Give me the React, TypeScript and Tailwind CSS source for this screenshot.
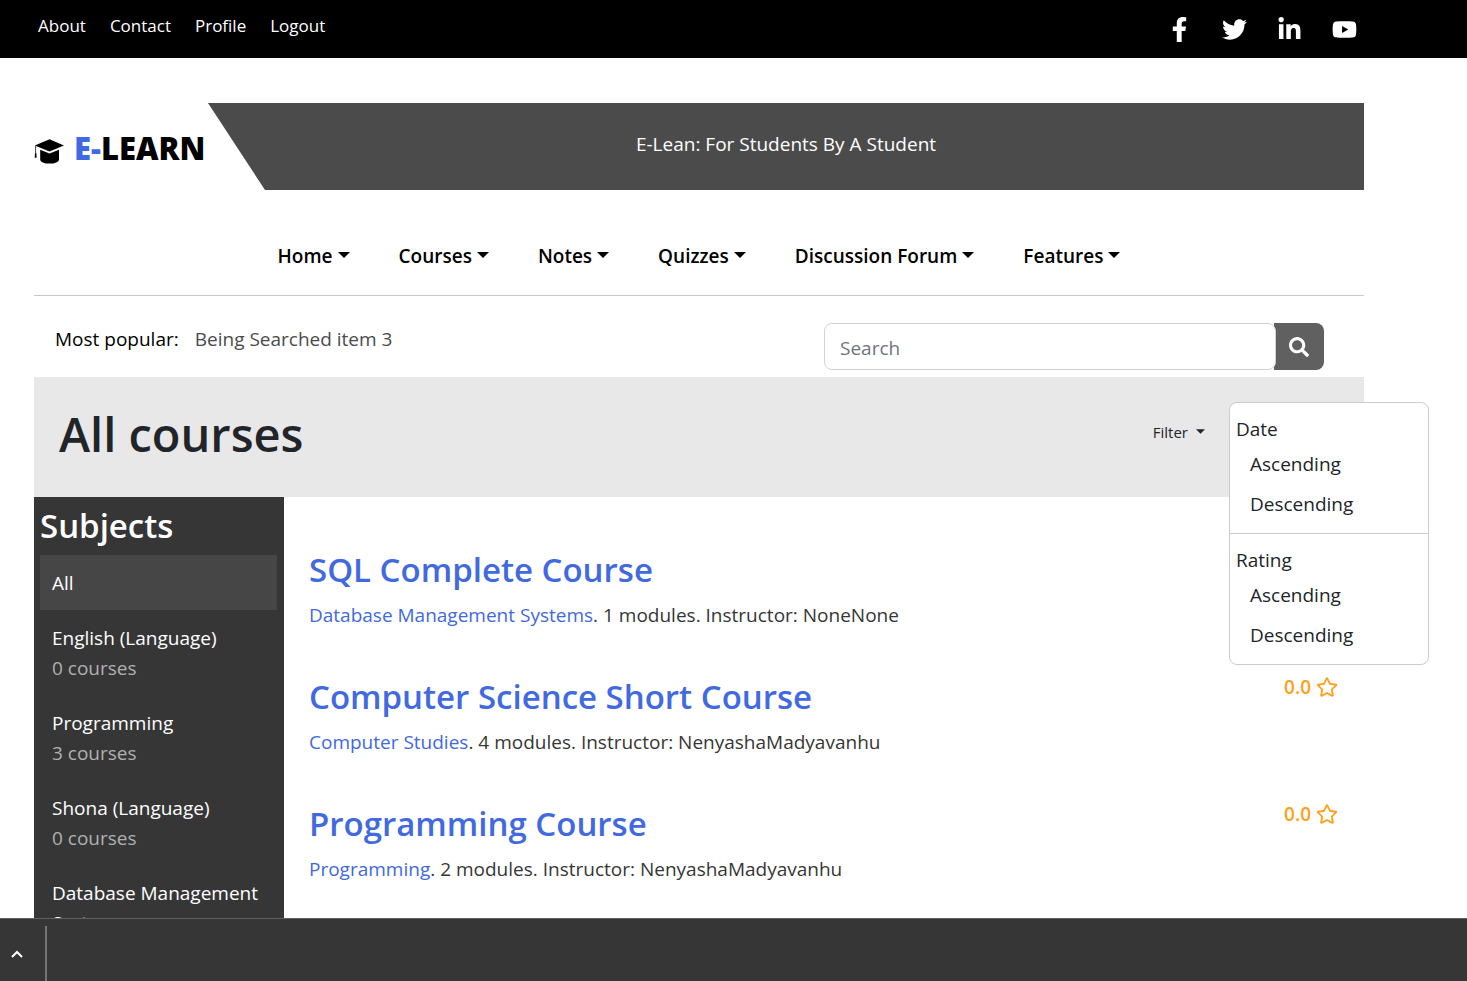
import React from "react";
import {
  FaFacebookF,
  FaTwitter,
  FaLinkedinIn,
  FaYoutube,
  FaSearch,
  FaRegStar,
} from "react-icons/fa";

const topLinks = ["About", "Contact", "Profile", "Logout"];
const menus = ["Home", "Courses", "Notes", "Quizzes", "Discussion Forum", "Features"];

const subjects = [
  { name: "All", count: "", active: true },
  { name: "English (Language)", count: "0 courses", active: false },
  { name: "Programming", count: "3 courses", active: false },
  { name: "Shona (Language)", count: "0 courses", active: false },
  { name: "Database Management Systems", count: "", active: false },
];

const courses = [
  { title: "SQL Complete Course", subject: "Database Management Systems", modules: 1, instructor: "NoneNone", rating: "" },
  { title: "Computer Science Short Course", subject: "Computer Studies", modules: 4, instructor: "NenyashaMadyavanhu", rating: "0.0" },
  { title: "Programming Course", subject: "Programming", modules: 2, instructor: "NenyashaMadyavanhu", rating: "0.0" },
];

function Caret({ small = false }: { small?: boolean }) {
  return (
    <svg
      viewBox="0 0 12 6"
      className={small ? "mb-0.5 h-[5px] w-[9px]" : "mb-0.5 h-1.5 w-3"}
      fill="currentColor"
      aria-hidden="true"
    >
      <path d="M0 0H12L6 6Z" />
    </svg>
  );
}

function GraduationCap() {
  return (
    <svg viewBox="0 0 30 26" className="h-[26px] w-[30px]" fill="black" aria-hidden="true">
      <path d="M15.5 0.3L30 6.6L15.5 12.6L0.8 6.6Z" />
      <path d="M6.2 10.8L15.5 14.4L25 10.8V20.4C25 23 20.6 24.6 15.5 24.6S6.2 23 6.2 20.4Z" />
      <path d="M1.6 7V16" stroke="#333333" strokeWidth="0.9" fill="none" />
      <path d="M1 14.2h1.3l0.3 4.5H0.7z" />
    </svg>
  );
}

function TopBar() {
  return (
    <header className="flex h-[58px] shrink-0 items-center justify-between bg-black pr-[110px] pl-[38px] text-white">
      <nav className="flex gap-6 pb-1.5 text-[17px] leading-7">
        {topLinks.map((label) => (
          <a key={label} href="#">{label}</a>
        ))}
      </nav>
      <div className="flex items-center gap-[30px] text-[25px]">
        <a href="#" aria-label="Facebook"><FaFacebookF /></a>
        <a href="#" aria-label="Twitter"><FaTwitter /></a>
        <a href="#" aria-label="LinkedIn"><FaLinkedinIn /></a>
        <a href="#" aria-label="YouTube"><FaYoutube /></a>
      </div>
    </header>
  );
}

function Banner() {
  return (
    <div className="mt-[45px] flex h-[87px]">
      <a href="#" className="flex w-[174px] shrink-0 items-center gap-2.5 pt-0.5">
        <span className="pt-2"><GraduationCap /></span>
        <span className="text-[31px] leading-9 font-extrabold whitespace-nowrap text-black">
          <span className="text-[#4169e1]">E-</span>LEARN
        </span>
      </a>
      <div className="flex flex-1 items-center justify-center bg-[#4b4b4b] pb-1 text-[19px] text-white [clip-path:polygon(0_0,100%_0,100%_100%,57px_100%)]">
        E-Lean: For Students By A Student
      </div>
    </div>
  );
}

function FilterMenu() {
  return (
    <div className="relative mr-[135px] pt-[18px]">
      <button type="button" className="flex items-center gap-2 px-6 text-[15px] leading-6 text-[#212529]">
        Filter <Caret small />
      </button>
      <div className="absolute top-0 left-full z-10 w-[200px] rounded-lg border border-[#cccccc] bg-white text-[19px] text-[#212529]">
        {["Date", "Rating"].map((group, i) => (
          <div
            key={group}
            className={i === 0 ? "h-[130px] px-1.5 pt-[11px]" : "h-[131px] border-t border-[#cccccc] px-1.5 pt-[11px]"}
          >
            <div className="leading-[30px]">{group}</div>
            <a href="#" className="mt-[5px] block px-3.5 leading-[30px]">Ascending</a>
            <a href="#" className="mt-2.5 block px-3.5 leading-[30px]">Descending</a>
          </div>
        ))}
      </div>
    </div>
  );
}

export default function App() {
  return (
    <div className="flex h-screen flex-col overflow-hidden bg-white font-['Open_Sans','Noto_Sans',sans-serif] text-[19px] text-[#212529]">
      <TopBar />
      <main className="min-h-0 flex-1 overflow-hidden pr-[103px] pl-[34px]">
        <Banner />

        <nav className="mt-[50px] flex h-14 items-start justify-center gap-[49px] border-b border-[#c8c8c8] text-[19px] font-semibold text-black">
          {menus.map((label) => (
            <button key={label} type="button" className="flex items-center gap-[5px] leading-8">
              {label} <Caret />
            </button>
          ))}
        </nav>

        <div className="flex justify-between pt-[27px] pr-10 pb-[7px] pl-[21px]">
          <p className="flex gap-4 leading-8 text-black">
            Most popular: <span className="text-[#4b4b4b]">Being Searched item 3</span>
          </p>
          <form className="flex w-[500px] bg-white">
            <input
              type="search"
              aria-label="Search"
              placeholder="Search"
              className="z-[1] h-[47px] min-w-0 flex-1 rounded-lg border border-[#ced4da] bg-white px-[15px] pt-0.5 placeholder:text-[#6c757d]"
            />
            <button
              type="button"
              aria-label="Submit search"
              className="-ml-0.5 flex w-[50px] items-center justify-center rounded-r-lg bg-[#606060] text-[20px] text-white"
            >
              <FaSearch />
            </button>
          </form>
        </div>

        <section className="flex h-[120px] items-start justify-between bg-[#e8e8e8] pt-[25px] pl-[25px]">
          <h1 className="text-[47px] leading-16 font-semibold">All courses</h1>
          <FilterMenu />
        </section>

        <div className="flex">
          <aside className="w-[250px] shrink-0 bg-[#363636] px-1.5 text-white">
            <h2 className="text-[33px] leading-[58px] font-semibold">Subjects</h2>
            <ul className="mr-px">
              {subjects.map((s) => (
                <li key={s.name}>
                  <a
                    href="#"
                    className={
                      s.active
                        ? "block bg-[#464646] px-3 pt-[13px] pb-3 leading-[30px]"
                        : "block px-3 pt-[13px] pb-3 leading-[30px]"
                    }
                  >
                    {s.name}
                    {s.count && <span className="block text-[#b0b0b0]">{s.count}</span>}
                  </a>
                </li>
              ))}
            </ul>
          </aside>

          <ul className="flex-1 pt-12 pr-[26px] pl-[25px]">
            {courses.map((c) => (
              <li key={c.title} className="flex h-[127px] items-start justify-between">
                <div>
                  <h3 className="text-[33px] leading-[50px] font-semibold text-[#4169e1]">
                    <a href="#">{c.title}</a>
                  </h3>
                  <p className="mt-[5px] leading-[30px] text-[#363636]">
                    <a href="#" className="text-[#4169e1]">{c.subject}</a>. {c.modules} modules. Instructor: {c.instructor}
                  </p>
                </div>
                {c.rating && (
                  <div className="flex items-center gap-[5px] leading-[30px] font-semibold text-[#ff9f1c]">
                    {c.rating} <FaRegStar className="text-[22px]" />
                  </div>
                )}
              </li>
            ))}
          </ul>
        </div>
      </main>

      <footer className="z-20 flex h-[63px] shrink-0 border-t border-[#606060] bg-[#363636] text-white">
        <button type="button" aria-label="Expand panel" className="mt-[7px] flex w-[47px] items-center border-r-2 border-[#757575] pl-[11px]">
          <svg viewBox="0 0 12 8" className="h-2 w-3" fill="none" stroke="currentColor" strokeWidth="2" aria-hidden="true">
            <path d="M1 7L6 2L11 7" />
          </svg>
        </button>
      </footer>
    </div>
  );
}
